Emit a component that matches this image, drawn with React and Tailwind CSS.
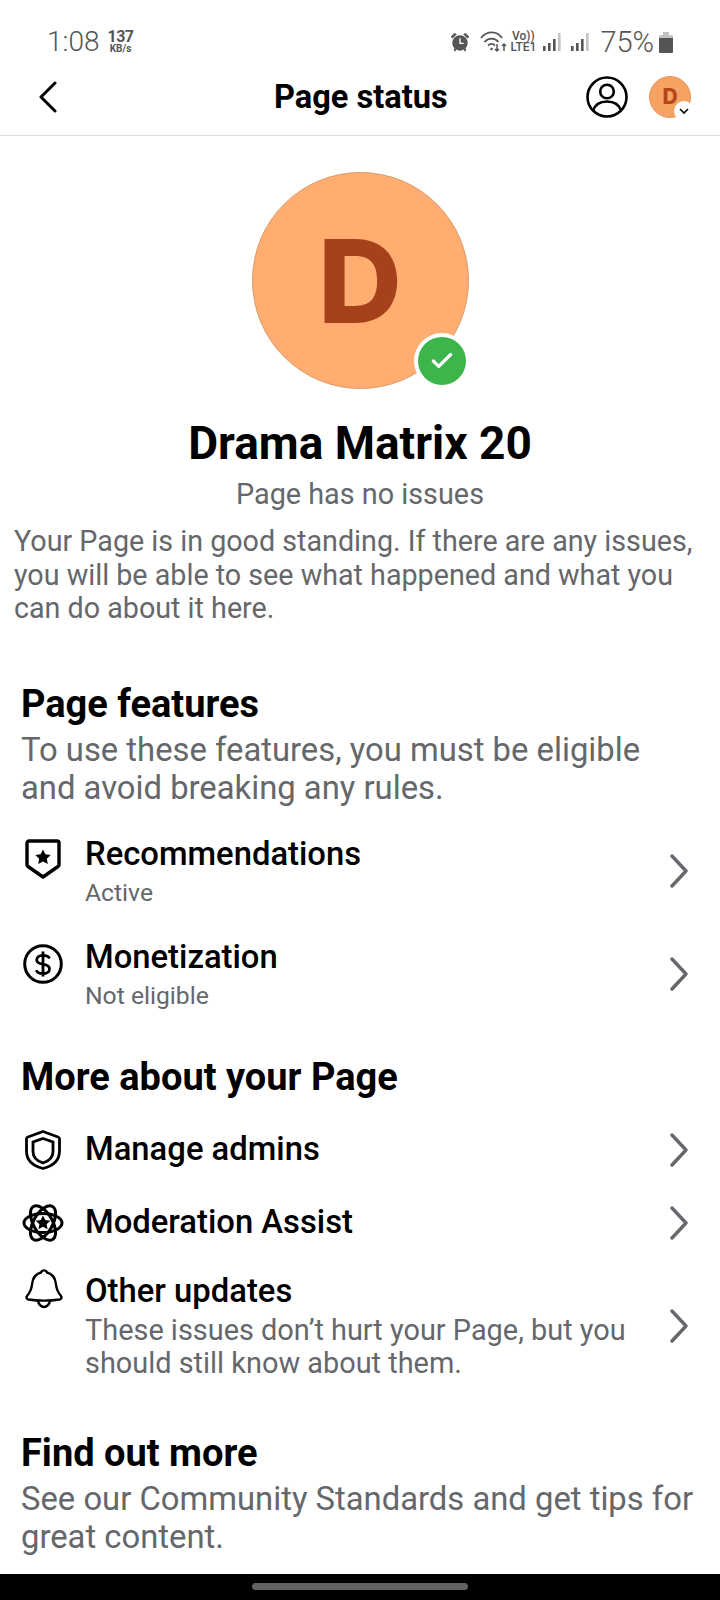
import React from 'react';
import { Check } from 'lucide-react';

function SignalIcon({ className }) {
  return (
    <svg width="18" height="20" viewBox="0 0 18 20" fill="#555555" className={className}>
      <rect x="0" y="14" width="2.6" height="5" />
      <rect x="5" y="11" width="2.6" height="8" />
      <rect x="10" y="7" width="2.6" height="12" />
      <rect x="15" y="1" width="2.6" height="18" fill="#c4c4c4" />
    </svg>
  );
}

function StatusBar() {
  return (
    <div className="h-[67px] flex items-end justify-between pl-[47px] pr-[47px] pb-[10px] text-[#555555] flex-shrink-0">
      <div className="flex items-center gap-[8px]">
        <span className="text-[28px] leading-[30px] font-light">1:08</span>
        <div className="flex flex-col items-center font-bold">
          <span className="text-[16px] leading-[14px] tracking-[-0.5px]">137</span>
          <span className="text-[10px] leading-[10px]">KB/s</span>
        </div>
      </div>
      <div className="flex items-center">
        <svg width="20" height="22" viewBox="0 0 22 24" fill="#555555" className="mr-[10px]">
          <circle cx="11" cy="13" r="8.500" />
          <path d="M11 8v5.500h4" stroke="#fff" strokeWidth="1.500" fill="none" />
          <path d="M1 6l4-4 2.500 1.500-5 5zM21 6l-4-4-2.500 1.500 5 5zM4 20l2-2 1.500 1-2 4zM18 20l-2-2-1.500 1 2 4z" />
        </svg>
        <svg width="27" height="22" viewBox="0 0 27 22" fill="none" stroke="#555555" strokeWidth="1.800" className="mr-[3px]">
          <path d="M1 7c6-7.500 16-7.500 21 0" />
          <path d="M4.500 11c4-4.500 10-4.500 14 0" />
          <path d="M8 14.500c2-2 5-2 7 0" />
          <circle cx="11.500" cy="18" r="1.300" fill="#555555" stroke="none" />
          <path d="M17 13v7m-2-2l2 2 2-2M24 20v-7m-2 2l2-2 2 2" strokeWidth="1.500" />
        </svg>
        <div className="flex flex-col items-center w-[26px] font-medium mr-[7px]">
          <span className="text-[12px] leading-[11px]">Vo))</span>
          <span className="text-[12px] leading-[11px]">LTE1</span>
        </div>
        <SignalIcon className="mr-[10px]" />
        <SignalIcon className="mr-[11px]" />
        <span className="text-[29px] leading-[30px] font-light mr-[5px]">75%</span>
        <svg width="14" height="21" viewBox="0 0 14 21">
          <path d="M4 0h6v3h3a1 1 0 0 1 1 1v5H0V4a1 1 0 0 1 1-1h3z" fill="#c4c4c4" />
          <path d="M0 6h14v14a1 1 0 0 1-1 1H1a1 1 0 0 1-1-1z" fill="#555555" />
        </svg>
      </div>
    </div>
  );
}

function NavBar() {
  return (
    <div className="relative h-[69px] flex items-center justify-between border-b border-[#dcdcdc] pl-[39px] pr-[29px] pb-[8px] flex-shrink-0">
      <svg width="18" height="32" viewBox="0 0 18 32" fill="none" stroke="black" strokeWidth="3" strokeLinecap="round" strokeLinejoin="round">
        <path d="M16 2L2 16l14 14" />
      </svg>
      <span className="absolute left-[274px] top-[11px] text-[32.600px] leading-[38px] font-bold">Page status</span>
      <div className="flex items-center gap-[21px]">
        <svg width="42" height="42" viewBox="0 0 42 42" fill="none" stroke="black" strokeWidth="2.600">
          <circle cx="21" cy="21" r="19.500" />
          <circle cx="21" cy="15.500" r="6.800" />
          <path d="M7 35c2-7 8-9.500 14-9.500S33 28 35 35" />
        </svg>
        <div className="relative w-[42px] h-[42px] rounded-full bg-[#f5a263] border border-[#e8985c] flex items-center justify-center">
          <span className="text-[21px] leading-none font-extrabold text-[#b5461a] font-['Inter',sans-serif] -mt-[1px]">D</span>
          <div className="absolute -right-[4px] -bottom-[4px] w-[20px] h-[20px] rounded-full bg-white flex items-center justify-center">
            <svg width="10" height="6" viewBox="0 0 10 6" fill="none" stroke="black" strokeWidth="1.600">
              <path d="M1 1l4 4 4-4" />
            </svg>
          </div>
        </div>
      </div>
    </div>
  );
}

function ShieldStar() {
  return (
    <svg width="36" height="40" viewBox="0 0 36 40" fill="none" stroke="black" strokeWidth="3.400" strokeLinejoin="round" className="mt-[4px]">
      <path d="M4 2h28a2 2 0 0 1 2 2v22a2 2 0 0 1-1 1.500L18 38 3 27.500A2 2 0 0 1 2 26V4a2 2 0 0 1 2-2z" />
      <path d="M18 10.500l2.400 4.800 5.300.7-3.900 3.700 1 5.300-4.800-2.600-4.800 2.600 1-5.300-3.900-3.700 5.300-.7z" fill="black" stroke="none" />
    </svg>
  );
}

function DollarCircle() {
  return (
    <svg width="40" height="40" viewBox="0 0 40 40" fill="none" stroke="black" strokeWidth="3" className="mt-[6px] -ml-[2px] mr-[2px]">
      <circle cx="20" cy="20" r="18.300" />
      <path d="M26.500 14.500c-.800-2-3-3.200-6.500-3.200-4 0-6.300 2-6.300 4.600s2.300 3.600 6.300 4.300 6.500 1.900 6.500 4.700-2.800 4.700-6.500 4.700c-3.500 0-5.900-1.200-6.800-3.400M20 7.500v25" strokeWidth="2.800" />
    </svg>
  );
}

function ShieldPlain() {
  return (
    <svg width="36" height="40" viewBox="0 0 36 40" fill="none" stroke="black" strokeWidth="2.800">
      <path d="M18 1.500l15 5.500a2 2 0 0 1 1.500 2V21c0 9-6.500 15-16.500 17.500C8 36 1.500 30 1.500 21V9A2 2 0 0 1 3 7z" />
      <path d="M18 8.500l10 3.500v9.500c0 6-4 9.500-10 11.500-6-2-10-5.500-10-11.500V12z" />
    </svg>
  );
}

function AtomStar() {
  return (
    <svg width="42" height="40" viewBox="0 0 42 40" fill="none" stroke="black" strokeWidth="3" className="-ml-[3px] mr-[3px]">
      <ellipse cx="21" cy="20" rx="19" ry="9.500" />
      <ellipse cx="21" cy="20" rx="19" ry="9.500" transform="rotate(60 21 20)" />
      <ellipse cx="21" cy="20" rx="19" ry="9.500" transform="rotate(-60 21 20)" />
      <path d="M21 12.500l2.300 4.500 5 .7-3.700 3.500 1 5-4.600-2.500-4.600 2.500 1-5-3.700-3.500 5-.7z" fill="black" stroke="none" />
    </svg>
  );
}

function Bell() {
  return (
    <svg width="38" height="42" viewBox="0 0 38 42" fill="none" stroke="black" strokeWidth="2.400" strokeLinejoin="round" className="mt-[-4px]">
      <path d="M16 4.500a3.200 3.200 0 0 1 6 0c6 1.500 8.500 6.500 9 12 .5 5 2 8 5 11.500 1 1.500.5 3-1.500 3.500-10 1.500-21 1.500-31 0-2-.5-2.500-2-1.500-3.500C5 24.500 6.500 21.500 7 16.500c.5-5.500 3-10.500 9-12z" />
      <path d="M13 33c.5 3 3 6 6 6s5.500-3 6-6" />
    </svg>
  );
}

function Row({ icon, title, sub, className }) {
  return (
    <div className={'flex items-start pl-[25px] pr-[32px] ' + className}>
      <div className="w-[60px] flex-shrink-0 flex">{icon}</div>
      <div className="flex-1">
        <div className="text-[32.800px] leading-[38px] font-medium text-black">{title}</div>
        {sub}
      </div>
      <svg width="18" height="34" viewBox="0 0 18 34" fill="none" stroke="#65676b" strokeWidth="3.400" strokeLinecap="round" strokeLinejoin="round" className="self-center">
        <path d="M2 2l14 15L2 32" />
      </svg>
    </div>
  );
}

function SubLabel({ children }) {
  return <div className="mt-[5px] text-[24.700px] leading-[30px] text-[#65676b]">{children}</div>;
}

export default function App() {
  return (
    <div className="w-[720px] h-[1600px] bg-white flex flex-col overflow-hidden text-black font-['Roboto',sans-serif]">
      <StatusBar />
      <NavBar />
      <div className="flex-1 min-h-0 overflow-hidden flex flex-col">
        <div className="flex flex-col items-center pt-[36px]">
          <div className="relative w-[217px] h-[217px] rounded-full bg-[#ffad70] border border-[#dd9a68] flex items-center justify-center">
            <span className="text-[116px] leading-none font-extrabold text-[#a5421c] font-['Inter',sans-serif]">D</span>
            <div className="absolute right-[-2px] bottom-[-1px] w-[56px] h-[56px] rounded-full bg-white flex items-center justify-center">
              <div className="w-[48px] h-[48px] rounded-full bg-[#3cb54a] flex items-center justify-center">
                <Check className="w-[26px] h-[26px] text-white" strokeWidth={3} />
              </div>
            </div>
          </div>
          <h1 className="mt-[27px] text-[46px] leading-[54px] font-bold">Drama Matrix 20</h1>
          <p className="mt-[7px] text-[28.800px] leading-[34px] text-[#65676b]">Page has no issues</p>
        </div>
        <p className="mt-[14px] px-[14px] text-[28.700px] leading-[33.500px] text-[#65676b]">
          Your Page is in good standing. If there are any issues, you will be able to see what happened and what you can do about it here.
        </p>
        <section className="mt-[56px] px-[21px]">
          <h2 className="text-[38px] leading-[44px] font-bold">Page features</h2>
          <p className="mt-[5px] text-[32.800px] leading-[38px] text-[#65676b]">To use these features, you must be eligible and avoid breaking any rules.</p>
        </section>
        <Row className="mt-[28px]" icon={<ShieldStar />} title="Recommendations" sub={<SubLabel>Active</SubLabel>} />
        <Row className="mt-[30px]" icon={<DollarCircle />} title="Monetization" sub={<SubLabel>Not eligible</SubLabel>} />
        <h2 className="mt-[44px] px-[21px] text-[38px] leading-[44px] font-bold">More about your Page</h2>
        <Row className="mt-[31px]" icon={<ShieldPlain />} title="Manage admins" />
        <Row className="mt-[33px]" icon={<AtomStar />} title="Moderation Assist" />
        <Row
          className="mt-[29px]"
          icon={<Bell />}
          title="Other updates"
          sub={<div className="mt-[4px] text-[28.900px] leading-[33px] text-[#65676b]">These issues don’t hurt your Page, but you should still know about them.</div>}
        />
        <section className="mt-[51px] px-[21px]">
          <h2 className="text-[38px] leading-[44px] font-bold">Find out more</h2>
          <p className="mt-[5px] text-[32.800px] leading-[38px] text-[#65676b]">See our Community Standards and get tips for great content.</p>
        </section>
      </div>
      <div className="h-[26px] bg-black flex items-start justify-center flex-shrink-0 pt-[9px]">
        <div className="w-[216px] h-[7px] rounded-full bg-[#636363]" />
      </div>
    </div>
  );
}
